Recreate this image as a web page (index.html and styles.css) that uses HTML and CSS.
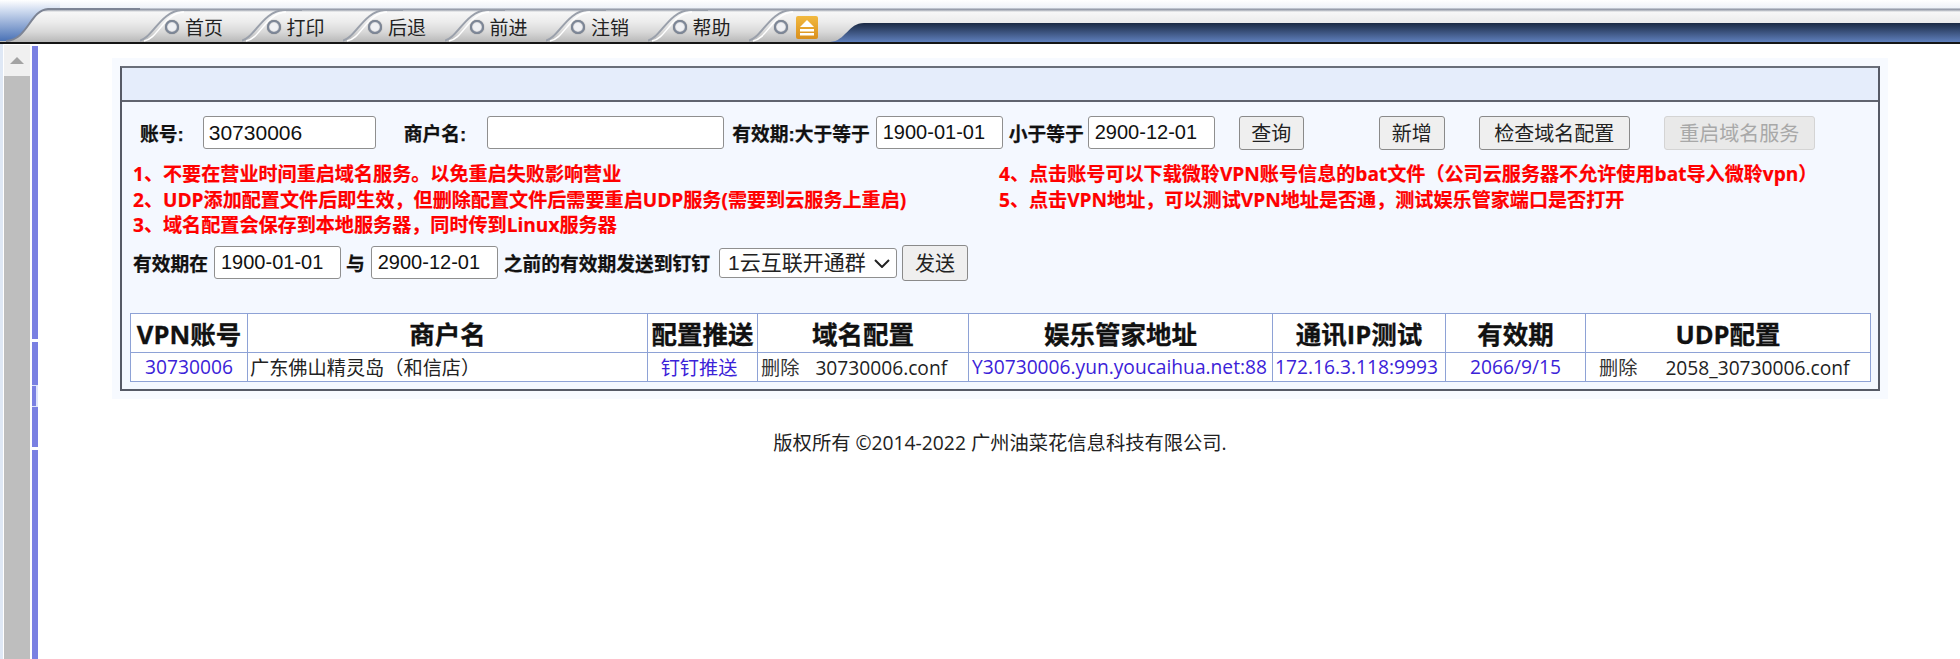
FILE: index.html
```html
<!DOCTYPE html>
<html lang="zh-CN">
<head>
  <meta charset="UTF-8" />
  <title>域名配置</title>
  <link rel="stylesheet" href="styles.css">
</head>
<body>
  <div class="topbar">
    <svg class="corner" width="140" height="42" viewBox="0 0 140 42">
      <defs>
        <linearGradient id="cornerBlue" x1="0" y1="0" x2="0" y2="1">
          <stop offset="0" stop-color="#ffffff" />
          <stop offset="0.25" stop-color="#d0dcf0" />
          <stop offset="1" stop-color="#4a72b6" />
        </linearGradient>
      </defs>
      <path d="M0 0H60V9H48C30 10 28 40 6 41H0Z" fill="url(#cornerBlue)" />
      <path d="M6 41C28 40 30 10 48 9H140" fill="none" stroke="#7d8494" stroke-width="2" />
    </svg>
    <div class="tab">
      <svg class="slash" width="60" height="33" viewBox="0 0 60 33"><path d="M-2 32C12 31 20 2 42 1H60" fill="none" stroke="#9aa0ab" stroke-width="2" /><path d="M4 32C18 30 24 4 44 3" fill="none" stroke="#fff" stroke-width="1.5" /></svg>
      <span class="dot"></span><span class="tab-text">首页</span>
    </div>
    <div class="tab">
      <svg class="slash" width="60" height="33" viewBox="0 0 60 33"><path d="M-2 32C12 31 20 2 42 1H60" fill="none" stroke="#9aa0ab" stroke-width="2" /><path d="M4 32C18 30 24 4 44 3" fill="none" stroke="#fff" stroke-width="1.5" /></svg>
      <span class="dot"></span><span class="tab-text">打印</span>
    </div>
    <div class="tab">
      <svg class="slash" width="60" height="33" viewBox="0 0 60 33"><path d="M-2 32C12 31 20 2 42 1H60" fill="none" stroke="#9aa0ab" stroke-width="2" /><path d="M4 32C18 30 24 4 44 3" fill="none" stroke="#fff" stroke-width="1.5" /></svg>
      <span class="dot"></span><span class="tab-text">后退</span>
    </div>
    <div class="tab">
      <svg class="slash" width="60" height="33" viewBox="0 0 60 33"><path d="M-2 32C12 31 20 2 42 1H60" fill="none" stroke="#9aa0ab" stroke-width="2" /><path d="M4 32C18 30 24 4 44 3" fill="none" stroke="#fff" stroke-width="1.5" /></svg>
      <span class="dot"></span><span class="tab-text">前进</span>
    </div>
    <div class="tab">
      <svg class="slash" width="60" height="33" viewBox="0 0 60 33"><path d="M-2 32C12 31 20 2 42 1H60" fill="none" stroke="#9aa0ab" stroke-width="2" /><path d="M4 32C18 30 24 4 44 3" fill="none" stroke="#fff" stroke-width="1.5" /></svg>
      <span class="dot"></span><span class="tab-text">注销</span>
    </div>
    <div class="tab">
      <svg class="slash" width="60" height="33" viewBox="0 0 60 33"><path d="M-2 32C12 31 20 2 42 1H60" fill="none" stroke="#9aa0ab" stroke-width="2" /><path d="M4 32C18 30 24 4 44 3" fill="none" stroke="#fff" stroke-width="1.5" /></svg>
      <span class="dot"></span><span class="tab-text">帮助</span>
    </div>
    <div class="tab tab-last">
      <svg class="slash" width="60" height="33" viewBox="0 0 60 33"><path d="M-2 32C12 31 20 2 42 1H60" fill="none" stroke="#9aa0ab" stroke-width="2" /><path d="M4 32C18 30 24 4 44 3" fill="none" stroke="#fff" stroke-width="1.5" /></svg>
      <span class="dot"></span>
      <svg class="eject" width="22" height="23" viewBox="0 0 22 23">
        <defs>
          <linearGradient id="ejectBg" x1="0" y1="0" x2="0" y2="1">
            <stop offset="0" stop-color="#f2b93f" />
            <stop offset="1" stop-color="#d98f1c" />
          </linearGradient>
        </defs>
        <rect width="22" height="23" rx="2" fill="url(#ejectBg)" />
        <path d="M11 4L18 11H4Z" fill="#fff" />
        <rect x="4" y="13" width="14" height="2.5" fill="#fff" />
        <rect x="4" y="17" width="14" height="2.5" fill="#fff" />
      </svg>
    </div>
    <svg class="navy-curve" width="40" height="19" viewBox="0 0 40 19">
      <defs>
        <linearGradient id="navyFill" x1="0" y1="0" x2="0" y2="1">
          <stop offset="0" stop-color="#1b2a44" />
          <stop offset="1" stop-color="#5f7fbc" />
        </linearGradient>
      </defs>
      <path d="M0 19C16 18 18 0 34 0H40V19Z" fill="url(#navyFill)" />
    </svg>
    <div class="navy"></div>
  </div>

  <div class="layout">
    <div class="side">
      <div class="scroll">
        <div class="scroll-up"><span class="arrow"></span></div>
        <div class="scroll-thumb"></div>
      </div>
      <div class="strip">
        <div class="strip-long"></div>
        <div class="strip-mid"></div>
        <div class="strip-mark"></div>
        <div class="strip-low"></div>
        <div class="strip-end"></div>
      </div>
    </div>

    <div class="main">
      <div class="panel-wrap">
        <div class="panel">
          <div class="panel-title"></div>
          <div class="panel-body">
            <div class="search-row">
              <label class="lbl lbl-account">账号:</label>
              <input class="field field-account" type="text" value="30730006">
              <label class="lbl lbl-shop">商户名:</label>
              <input class="field field-shop" type="text">
              <label class="lbl lbl-from">有效期:大于等于</label>
              <input class="field field-date" type="text" value="1900-01-01">
              <label class="lbl lbl-to">小于等于</label>
              <input class="field field-date" type="text" value="2900-12-01">
              <button class="btn btn-query">查询</button>
              <button class="btn btn-add">新增</button>
              <button class="btn btn-check">检查域名配置</button>
              <button class="btn btn-restart" disabled>重启域名服务</button>
            </div>

            <div class="notes">
              <div>1、不要在营业时间重启域名服务。以免重启失败影响营业</div>
              <div>4、点击账号可以下载微聆VPN账号信息的bat文件（公司云服务器不允许使用bat导入微聆vpn）</div>
              <div>2、UDP添加配置文件后即生效，但删除配置文件后需要重启UDP服务(需要到云服务上重启)</div>
              <div>5、点击VPN地址，可以测试VPN地址是否通，测试娱乐管家端口是否打开</div>
              <div>3、域名配置会保存到本地服务器，同时传到Linux服务器</div>
            </div>

            <div class="send-row">
              <label class="lbl">有效期在</label>
              <input class="field field-date" type="text" value="1900-01-01">
              <label class="lbl">与</label>
              <input class="field field-date" type="text" value="2900-12-01">
              <label class="lbl">之前的有效期发送到钉钉</label>
              <div class="select-wrap">
                <select class="group-select">
                  <option>1云互联开通群</option>
                </select>
                <svg class="chevron" width="16" height="9" viewBox="0 0 16 9"><path d="M1 1L8 8L15 1" fill="none" stroke="#222" stroke-width="2" /></svg>
              </div>
              <button class="btn btn-send">发送</button>
            </div>

            <table class="list">
              <thead>
                <tr>
                  <th class="col-vpn">VPN账号</th>
                  <th class="col-name">商户名</th>
                  <th class="col-push">配置推送</th>
                  <th class="col-domain">域名配置</th>
                  <th class="col-addr">娱乐管家地址</th>
                  <th class="col-ip">通讯IP测试</th>
                  <th class="col-date">有效期</th>
                  <th class="col-udp">UDP配置</th>
                </tr>
              </thead>
              <tbody>
                <tr>
                  <td class="center"><a href="#">30730006</a></td>
                  <td>广东佛山精灵岛（和信店）</td>
                  <td class="center cell-push"><a href="#">钉钉推送</a></td>
                  <td class="cell-domain"><span class="del">删除</span>30730006.conf</td>
                  <td class="center cell-addr"><a href="#">Y30730006.yun.youcaihua.net:88</a></td>
                  <td class="center cell-ip"><a href="#">172.16.3.118:9993</a></td>
                  <td class="center"><a href="#">2066/9/15</a></td>
                  <td class="cell-udp"><span class="del del-wide">删除</span>2058_30730006.conf</td>
                </tr>
              </tbody>
            </table>
          </div>
        </div>
      </div>
      <div class="footer">版权所有 ©2014-2022 广州油菜花信息科技有限公司.</div>
    </div>
  </div>
</body>
</html>
```

FILE: styles.css
```css
* { box-sizing: border-box; }
html, body {
  margin: 0; padding: 0;
  height: 100%;
  overflow: hidden;
  background: #fff;
  color: #111;
  font-family: "Liberation Sans", "Noto Sans CJK SC", sans-serif;
  font-feature-settings: "chws" 0;
  text-spacing-trim: space-all;
}

/* top bar */
.topbar {
  display: flex;
  align-items: flex-end;
  height: 44px;
  border-bottom: 2px solid #151515;
  background: linear-gradient(180deg, #fff 0, #eef2f8 8px, #8d94a3 9px, #a4a9b4 10px, #f7f7f7 12px, #ececec 22px, #d8d8d8 32px, #b8b8b8 42px);
}
.corner { flex: none; display: block; }
.tab {
  flex: none;
  display: flex;
  align-items: center;
  width: 101.5px;
  height: 33px;
}
.tab-last { width: 81px; }
.slash {
  flex: none;
  margin-right: -35px;
}
.dot {
  flex: none;
  width: 14px;
  height: 14px;
  margin: 3px 6px 0 0;
  border-radius: 50%;
  border: 2px solid #7d8798;
  background: #f0f1f4;
  box-shadow: 0 0 1px #666, inset 0 0 1px #666;
}
.tab-text {
  margin-top: 3px;
  font-family: "Noto Sans CJK SC", sans-serif;
  font-size: 19px;
  line-height: 30px;
  color: #222;
}
.tab-last .dot { margin-right: 8px; }
.eject { flex: none; margin-top: 3px; }
.navy-curve { flex: none; display: block; }
.navy {
  flex: 1;
  height: 19px;
  background: linear-gradient(180deg, #1b2a44, #5f7fbc);
}

/* left frame bar */
.layout {
  display: flex;
  height: 615px;
}
.side {
  flex: none;
  display: flex;
  width: 38px;
  background: #fff;
}
.scroll {
  width: 30px;
  padding: 1px 0 0 1px;
  border-left: 3px solid #dfe8f5;
  display: flex;
  flex-direction: column;
}
.scroll-up {
  height: 31px;
  background: #f0f0f0;
  display: flex;
  align-items: center;
  justify-content: center;
}
.arrow {
  width: 0;
  height: 0;
  border-left: 7px solid transparent;
  border-right: 7px solid transparent;
  border-bottom: 7px solid #a3a3a3;
}
.scroll-thumb {
  flex: 1;
  background: #bebebe;
}
.strip {
  width: 6px;
  margin-left: 2px;
  padding-top: 2px;
  display: flex;
  flex-direction: column;
}
.strip-long { height: 293px; background: #7a80e2; }
.strip-mid { height: 43px; margin-top: 3px; background: #7a80e2; }
.strip-mark {
  height: 22px;
  background: #7a80e2;
  border: 1px solid #dfe4fb;
  border-left: none;
  border-right-width: 2px;
}
.strip-low { height: 40px; background: #7a80e2; }
.strip-end { flex: 1; margin-top: 3px; background: #7a80e2; }

/* main */
.main {
  flex: 1;
  padding: 14px 73px 0 74px;
}
.panel-wrap {
  padding: 8px;
  background: #f7faff;
}
.panel {
  border: 2px solid #565a66;
  border-top-color: #6a6f7a;
  background: #f4f8ff;
}
.panel-title {
  height: 34px;
  background: #e5edfb;
  border-bottom: 2px solid #60646f;
}
.panel-body {
  padding: 13px 7px 7px;
}

.search-row, .send-row {
  display: flex;
  align-items: center;
}
.search-row { height: 35px; }
.lbl {
  flex: none;
  font-size: 18.75px;
  font-weight: bold;
  color: #111;
  -webkit-text-stroke: 0.25px #111;
}
.lbl-account { margin-left: 11px; margin-right: 19px; }
.lbl-shop { margin-left: 28px; margin-right: 21px; }
.lbl-from { margin-left: 8px; margin-right: 6px; }
.lbl-to { margin-left: 6px; margin-right: 4px; }

.field {
  flex: none;
  height: 33px;
  padding: 0 6px;
  border: 1px solid #8f8f8f;
  border-radius: 3px;
  background: #fff;
  color: #111;
  font-family: "Liberation Sans", sans-serif;
  font-size: 20px;
}
.field-account { width: 173px; padding-left: 5px; font-size: 21px; }
.field-shop { width: 237px; }
.field-date { width: 127px; }

.btn {
  flex: none;
  height: 34px;
  padding: 0;
  border: 1px solid #8a8a8a;
  border-radius: 3px;
  background: #efefef;
  color: #222;
  font-family: "Noto Sans CJK SC", sans-serif;
  font-size: 20px;
}
.btn-query { width: 65px; margin-left: 24px; }
.btn-add { width: 66px; margin-left: 75px; }
.btn-check { width: 151px; margin-left: 34px; }
.btn-restart {
  width: 151px;
  margin-left: 34px;
  border-color: #d4d4d4;
  background: #e9e9e9;
  color: #a8a8a8;
}

.notes {
  display: grid;
  grid-template-columns: 866px 1fr;
  margin: 12px 0 0 4px;
  color: #f00;
  font-size: 19.1px;
  font-weight: bold;
  line-height: 25.5px;
  font-family: "Open Sans", "Noto Sans CJK SC", sans-serif;
  white-space: nowrap;
  -webkit-text-stroke: 0.2px #f00;
}

.send-row {
  height: 36px;
  margin: 6px 0 0 4px;
}
.send-row .lbl:nth-of-type(1) { margin-right: 6px; }
.send-row .lbl:nth-of-type(2) { margin: 0 6px 0 5px; }
.send-row .lbl:nth-of-type(3) { margin: 0 6px 0 6px; }
.select-wrap {
  flex: none;
  position: relative;
  display: flex;
  margin-left: 3px;
}
.group-select {
  appearance: none;
  width: 178px;
  height: 30px;
  padding: 0 20px 0 8px;
  border: 1px solid #8f8f8f;
  border-radius: 3px;
  background: #fff;
  color: #222;
  font-family: "Liberation Sans", "Noto Sans CJK SC", sans-serif;
  font-size: 21px;
}
.chevron {
  position: absolute;
  top: 11px;
  right: 7px;
}
.btn-send { width: 66px; height: 36px; margin-left: 5px; }

/* table */
.list {
  width: 1740px;
  margin: 32px 0 0 1px;
  border-collapse: collapse;
  table-layout: fixed;
  background: #fff;
  font-family: "Open Sans", "Noto Sans CJK SC", sans-serif;
}
.list th, .list td {
  border: 1px solid #8ea2d6;
  padding: 0 2px;
  white-space: nowrap;
  overflow: hidden;
}
.list th {
  height: 39px;
  font-size: 25.5px;
  font-weight: bold;
  color: #111;
  -webkit-text-stroke: 0.3px #111;
}
.list td {
  height: 29px;
  font-size: 19.2px;
  color: #222;
}
.col-vpn { width: 117px; }
.col-name { width: 400px; }
.col-push { width: 110px; }
.col-domain { width: 211px; }
.col-addr { width: 304px; }
.col-ip { width: 173px; }
.col-date { width: 140px; }
.col-udp { width: 285px; }
.center { text-align: center; }
.list a { color: #3b22d8; text-decoration: none; }
.del { margin-right: 16px; color: #333; }
.list .cell-push { padding-right: 9px; }
.list .cell-domain { padding-left: 3px; }
.list .cell-addr { padding-right: 4px; }
.list .cell-ip { padding-right: 7px; }
.list .cell-udp { padding-left: 13px; }
.del-wide { margin-right: 28px; }

.footer {
  margin-top: 32px;
  text-align: center;
  font-family: "Open Sans", "Noto Sans CJK SC", sans-serif;
  font-size: 19.3px;
  line-height: 24px;
  color: #222;
}
```
